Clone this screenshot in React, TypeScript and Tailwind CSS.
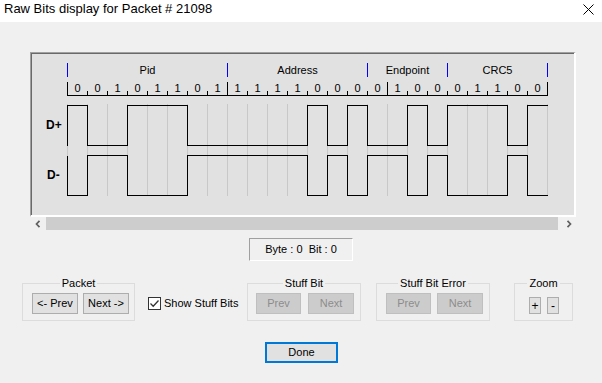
import React from 'react';

const bits = [0, 0, 1, 0, 1, 1, 0, 1, 1, 1, 1, 1, 0, 0, 0, 0, 1, 0, 0, 0, 1, 1, 0, 0];

const fields = [
  { name: 'Pid', cls: 'w-[160px]' },
  { name: 'Address', cls: 'w-[140px]' },
  { name: 'Endpoint', cls: 'w-[80px]' },
  { name: 'CRC5', cls: 'w-[101px] border-r' },
];

const CELL = 20;

// NRZI: a 0 toggles the line, a 1 keeps it
const levels: number[] = [];
{
  let lvl = 0;
  for (const b of bits) {
    if (b === 0) lvl = 1 - lvl;
    levels.push(lvl);
  }
}

const trace = (top: number, bottom: number, inverted: boolean) => {
  const y = (l: number) => ((inverted ? 1 - l : l) ? top : bottom);
  let d = `M0.5 ${y(1 - levels[0])}`;
  levels.forEach((l, i) => {
    const x = i * CELL + 0.5;
    d += ` L${x} ${y(l)} H${x + CELL}`;
  });
  return d;
};

const Btn = ({ children, disabled, className = '' }: { children: React.ReactNode; disabled?: boolean; className?: string }) => (
  <button
    className={`flex items-center justify-center border text-[11px] leading-none ${
      disabled ? 'border-[#bfbfbf] bg-[#cccccc] text-[#8c8c8c]' : 'border-[#adadad] bg-[#e1e1e1] text-black'
    } ${className}`}
  >
    {children}
  </button>
);

const Group = ({ title, className, children }: { title: string; className: string; children: React.ReactNode }) => (
  <fieldset className={`h-[44px] shrink-0 border border-[#dcdcdc] ${className}`}>
    <legend className="mx-auto px-[2px] text-[11px] leading-[13px]">{title}</legend>
    {children}
  </fieldset>
);

export default function App() {
  return (
    <div className="flex h-[383px] w-[602px] flex-col bg-[#f0f0f0] font-['Liberation_Sans',Arial,sans-serif] text-black">
      {/* title bar */}
      <div className="flex h-[22px] shrink-0 justify-between bg-white">
        <div className="pl-[4px] pt-[1px] text-[13px] leading-[16px]">Raw Bits display for Packet # 21098</div>
        <svg className="mr-[8px] mt-[4px]" width="11" height="11" viewBox="0 0 11 11">
          <path d="M0.5 0.5 L10.5 10.5 M10.5 0.5 L0.5 10.5" stroke="#000" strokeWidth="1" />
        </svg>
      </div>

      {/* bit display */}
      <div className="ml-[30px] mt-[30px] h-[165px] w-[546px] shrink-0 border-t border-r-2 border-b-2 border-l border-t-[#a0a0a0] border-r-white border-b-white border-l-[#a0a0a0]">
        <div className="h-full border-t border-l border-[#696969] bg-[#e1e1e1] pt-[9px]">
          <div className="ml-[35px] flex h-[14px] text-[11px] leading-[14px]">
            {fields.map((f) => (
              <div key={f.name} className={`border-l border-[#0000ff] text-center ${f.cls}`}>
                {f.name}
              </div>
            ))}
          </div>

          <div className="ml-[35px] flex h-[19px] w-[481px] items-end border-b border-black text-[11px] leading-[12px]">
            {bits.map((b, i) => (
              <div key={i} className="flex w-[20px] items-end">
                <div className={`w-px bg-black ${i % 8 === 0 ? 'h-[13px]' : 'h-[4px]'}`} />
                <span className="flex-1 pb-[1px] text-center">{b}</span>
              </div>
            ))}
            <div className="h-[13px] w-px bg-black" />
          </div>

          <div className="mt-[4px] flex">
            <div className="flex w-[35px] flex-col pl-[14px] text-[12px] font-bold leading-[14px]">
              <span className="mt-[18px]">D+</span>
              <span className="mt-[36px] pl-[1px]">D-</span>
            </div>
            <svg width="482" height="97" viewBox="0 0 482 97" shapeRendering="crispEdges">
              {Array.from({ length: bits.length + 1 }, (_, i) => (
                <line key={i} x1={i * CELL + 0.5} y1={4} x2={i * CELL + 0.5} y2={96} stroke="#c8c8c8" />
              ))}
              <path d={trace(5.5, 45.5, false)} fill="none" stroke="#000" />
              <path d={trace(55.5, 95.5, true)} fill="none" stroke="#000" />
            </svg>
          </div>
        </div>
      </div>

      {/* horizontal scroll bar */}
      <div className="ml-[30px] flex h-[13px] w-[546px] shrink-0">
        <div className="flex w-[16px] items-center justify-center">
          <svg width="6" height="8" viewBox="0 0 6 8">
            <path d="M4.5 0.8 L1.5 4 L4.5 7.2" fill="none" stroke="#606060" strokeWidth="1.7" />
          </svg>
        </div>
        <div className="flex-1 bg-[#cdcdcd]" />
        <div className="flex w-[18px] items-center pl-[8px]">
          <svg width="6" height="8" viewBox="0 0 6 8">
            <path d="M1.5 0.8 L4.5 4 L1.5 7.2" fill="none" stroke="#606060" strokeWidth="1.7" />
          </svg>
        </div>
      </div>

      <div className="ml-[249px] mt-[8px] flex h-[23px] w-[104px] shrink-0 items-center justify-center whitespace-pre border-t border-r border-b border-l border-t-[#a0a0a0] border-r-white border-b-white border-l-[#a0a0a0] text-[11px]">
        Byte : 0  Bit : 0
      </div>

      {/* controls */}
      <div className="ml-[22px] mt-[16px] flex shrink-0 items-start">
        <Group title="Packet" className="w-[113px]">
          <div className="flex gap-[5px] pl-[9px] pt-[3px]">
            <Btn className="h-[21px] w-[46px]">&lt;- Prev</Btn>
            <Btn className="h-[21px] w-[46px]">Next -&gt;</Btn>
          </div>
        </Group>

        <label className="ml-[13px] mt-[20px] flex w-[99px] items-center gap-[3px] text-[11px] leading-[13px]">
          <span className="flex h-[13px] w-[13px] items-center justify-center border border-[#333333] bg-white">
            <svg width="11" height="11" viewBox="0 0 11 11">
              <path d="M1.5 5.5 L4.2 8.2 L9.5 2.5" fill="none" stroke="#333333" strokeWidth="1.3" />
            </svg>
          </span>
          Show Stuff Bits
        </label>

        <Group title="Stuff Bit" className="w-[114px]">
          <div className="flex gap-[7px] pl-[8px] pt-[3px]">
            <Btn disabled className="h-[21px] w-[45px]">Prev</Btn>
            <Btn disabled className="h-[21px] w-[46px]">Next</Btn>
          </div>
        </Group>

        <Group title="Stuff Bit Error" className="ml-[15px] w-[114px]">
          <div className="flex gap-[6px] pl-[9px] pt-[3px]">
            <Btn disabled className="h-[21px] w-[45px]">Prev</Btn>
            <Btn disabled className="h-[21px] w-[46px]">Next</Btn>
          </div>
        </Group>

        <Group title="Zoom" className="ml-[24px] w-[59px]">
          <div className="flex gap-[6px] pl-[14px] pt-[7px]">
            <Btn className="h-[17px] w-[12px] text-[12px]">+</Btn>
            <Btn className="h-[17px] w-[12px] text-[12px]">-</Btn>
          </div>
        </Group>
      </div>

      <button className="ml-[265px] mt-[21px] flex h-[21px] w-[73px] shrink-0 items-center justify-center border-2 border-[#0078d7] bg-[#e1e1e1] text-[11px]">
        Done
      </button>
    </div>
  );
}
